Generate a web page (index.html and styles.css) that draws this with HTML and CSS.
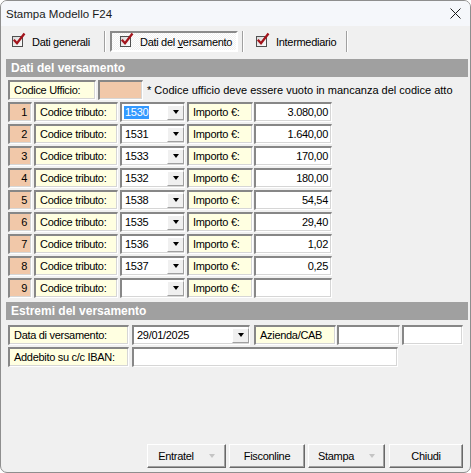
FILE: index.html
```html
<!DOCTYPE html>
<html>
<head>
<meta charset="utf-8">
<link rel="stylesheet" href="styles.css">
</head>
<body>
<div class="window">
  <div class="titlebar">
    <span class="title">Stampa Modello F24</span>
    <svg class="close" width="11" height="11" viewBox="0 0 11 11"><path d="M0.5 0.5 L10.5 10.5 M10.5 0.5 L0.5 10.5" stroke="#1a1a1a" stroke-width="1" fill="none"/></svg>
  </div>
  <div class="tabs">
    <div class="tab t1">
      <svg class="chk" width="11" height="11" viewBox="0 0 11 11"><defs><linearGradient id="g1" x1="0" y1="0" x2="1" y2="1"><stop offset="0" stop-color="#d8d8d8"/><stop offset="1" stop-color="#ffffff"/></linearGradient></defs><rect x="0.5" y="0.5" width="10" height="10" fill="url(#g1)" stroke="#505050"/><path d="M1.8 3.8 L5 7.3 L12.5 -2.5" stroke="#a3141c" stroke-width="2.3" fill="none"/></svg>
      <span>Dati generali</span>
    </div>
    <div class="sep"></div>
    <div class="tab t2 pressed">
      <svg class="chk" width="11" height="11" viewBox="0 0 11 11"><rect x="0.5" y="0.5" width="10" height="10" fill="url(#g1)" stroke="#505050"/><path d="M1.8 3.8 L5 7.3 L12.5 -2.5" stroke="#a3141c" stroke-width="2.3" fill="none"/></svg>
      <span>Dati del <u>v</u>ersamento</span>
    </div>
    <div class="sep"></div>
    <div class="tab t3">
      <svg class="chk" width="11" height="11" viewBox="0 0 11 11"><rect x="0.5" y="0.5" width="10" height="10" fill="url(#g1)" stroke="#505050"/><path d="M1.8 3.8 L5 7.3 L12.5 -2.5" stroke="#a3141c" stroke-width="2.3" fill="none"/></svg>
      <span>Intermediario</span>
    </div>
    <div class="sep"></div>
  </div>

  <div class="content">
    <div class="section">Dati del versamento</div>
    <div class="rows">
      <div class="row">
        <div class="box label w-uff">Codice Ufficio:</div>
        <div class="box peach w-uffv"></div>
        <div class="note">* Codice ufficio deve essere vuoto in mancanza del codice atto</div>
      </div>

      <div class="row">
        <div class="box peach num">1</div>
        <div class="box label w-trib">Codice tributo:</div>
        <div class="box input combo w-combo"><span class="sel">1530</span><span class="ddbtn"><i class="tri"></i></span></div>
        <div class="box label w-imp">Importo €:</div>
        <div class="box input val">3.080,00</div>
      </div>
      <div class="row">
        <div class="box peach num">2</div>
        <div class="box label w-trib">Codice tributo:</div>
        <div class="box input combo w-combo"><span>1531</span><span class="ddbtn"><i class="tri"></i></span></div>
        <div class="box label w-imp">Importo €:</div>
        <div class="box input val">1.640,00</div>
      </div>
      <div class="row">
        <div class="box peach num">3</div>
        <div class="box label w-trib">Codice tributo:</div>
        <div class="box input combo w-combo"><span>1533</span><span class="ddbtn"><i class="tri"></i></span></div>
        <div class="box label w-imp">Importo €:</div>
        <div class="box input val">170,00</div>
      </div>
      <div class="row">
        <div class="box peach num">4</div>
        <div class="box label w-trib">Codice tributo:</div>
        <div class="box input combo w-combo"><span>1532</span><span class="ddbtn"><i class="tri"></i></span></div>
        <div class="box label w-imp">Importo €:</div>
        <div class="box input val">180,00</div>
      </div>
      <div class="row">
        <div class="box peach num">5</div>
        <div class="box label w-trib">Codice tributo:</div>
        <div class="box input combo w-combo"><span>1538</span><span class="ddbtn"><i class="tri"></i></span></div>
        <div class="box label w-imp">Importo €:</div>
        <div class="box input val">54,54</div>
      </div>
      <div class="row">
        <div class="box peach num">6</div>
        <div class="box label w-trib">Codice tributo:</div>
        <div class="box input combo w-combo"><span>1535</span><span class="ddbtn"><i class="tri"></i></span></div>
        <div class="box label w-imp">Importo €:</div>
        <div class="box input val">29,40</div>
      </div>
      <div class="row">
        <div class="box peach num">7</div>
        <div class="box label w-trib">Codice tributo:</div>
        <div class="box input combo w-combo"><span>1536</span><span class="ddbtn"><i class="tri"></i></span></div>
        <div class="box label w-imp">Importo €:</div>
        <div class="box input val">1,02</div>
      </div>
      <div class="row">
        <div class="box peach num">8</div>
        <div class="box label w-trib">Codice tributo:</div>
        <div class="box input combo w-combo"><span>1537</span><span class="ddbtn"><i class="tri"></i></span></div>
        <div class="box label w-imp">Importo €:</div>
        <div class="box input val">0,25</div>
      </div>
      <div class="row">
        <div class="box peach num">9</div>
        <div class="box label w-trib">Codice tributo:</div>
        <div class="box input combo w-combo"><span></span><span class="ddbtn"><i class="tri"></i></span></div>
        <div class="box label w-imp">Importo €:</div>
        <div class="box input val"></div>
      </div>
    </div>

    <div class="section s2">Estremi del versamento</div>
    <div class="rows rows2">
      <div class="row">
        <div class="box label w-data">Data di versamento:</div>
        <div class="box input combo w-date"><span>29/01/2025</span><span class="ddbtn"><i class="tri"></i></span></div>
        <div class="box label w-az">Azienda/CAB</div>
        <div class="box input w-az1"></div>
        <div class="box input w-az2"></div>
      </div>
      <div class="row">
        <div class="box label w-data">Addebito su c/c IBAN:</div>
        <div class="box input w-iban"></div>
      </div>
    </div>
  </div>

  <div class="buttons">
    <div class="btn b1"><span>Entratel</span><i class="tri gray"></i></div>
    <div class="btn b2"><span>Fisconline</span></div>
    <div class="btn b3"><span>Stampa</span><i class="tri gray"></i></div>
    <div class="btn b4"><span>Chiudi</span></div>
  </div>
</div>
</body>
</html>
```

FILE: styles.css
```css
* { box-sizing: border-box; }
html, body { margin: 0; padding: 0; }
body {
  width: 471px;
  height: 473px;
  background: #ffffff;
  font-family: "Liberation Sans", Arial, sans-serif;
  font-size: 11px;
  letter-spacing: -0.3px;
  color: #000;
}
.window {
  width: 471px;
  height: 473px;
  border: 1px solid #8e8e8e;
  border-radius: 7px;
  background: #f0f0f0;
  display: flex;
  flex-direction: column;
  overflow: hidden;
}
.titlebar {
  height: 25px;
  flex-shrink: 0;
  background: #f5f7fb;
  display: flex;
  align-items: center;
  padding-left: 5px;
  padding-right: 9px;
}
.title {
  font-family: "Liberation Sans", Arial, sans-serif;
  font-size: 11.5px;
  letter-spacing: 0;
  color: #1a1a1a;
}
.close { margin-left: auto; }

.tabs {
  display: flex;
  padding-top: 5px;
  padding-left: 3px;
  height: 26px;
  flex-shrink: 0;
}
.tab {
  display: flex;
  align-items: center;
  height: 21px;
  padding-left: 8px;
  gap: 9px;
  white-space: nowrap;
}
.chk { overflow: visible; flex-shrink: 0; }
.t1 { width: 96px; }
.t2 { width: 128px; }
.t3 { width: 94px; }
.pressed {
  border: 2px solid;
  border-color: #8a8a8a #ffffff #ffffff #8a8a8a;
  background: repeating-conic-gradient(#ffffff 0 25%, #f0f0f0 0 50%) 0 0 / 2px 2px;
}
.sep {
  width: 2px;
  height: 21px;
  border-left: 1px solid #a0a0a0;
  border-right: 1px solid #ffffff;
  margin: 0 4px;
}

.content {
  padding-left: 5px;
  padding-right: 2px;
  margin-top: 7px;
}
.section {
  height: 18px;
  line-height: 18px;
  background: #a0a0a0;
  color: #ffffff;
  font-weight: bold;
  font-size: 12px;
  letter-spacing: 0;
  padding-left: 5px;
}
.s2 { margin-top: 4px; }
.rows {
  margin-left: 2px;
  margin-top: 3px;
  display: flex;
  flex-direction: column;
  gap: 2px;
}
.rows2 { margin-top: 5px; }
.row {
  display: flex;
  height: 20px;
  align-items: stretch;
}
.box {
  height: 20px;
  border-style: solid;
  border-width: 2px 1px 1px 2px;
  border-color: #878787 #ffffff #ffffff #878787;
  box-shadow: inset -1px -1px #d6d6d6;
  line-height: 16px;
  white-space: nowrap;
  overflow: hidden;
  flex-shrink: 0;
}
.label { background: #ffffe1; padding-left: 4px; }
.peach { background: #f1c8a9; }
.input { background: #ffffff; }
.num { width: 24px; margin-right: 2px; text-align: right; padding-right: 4px; }
.w-uff { width: 88px; margin-right: 2px; }
.w-uffv { width: 45px; margin-right: 4px; }
.note { line-height: 20px; white-space: nowrap; letter-spacing: 0; }
.w-trib { width: 84px; margin-right: 2px; }
.w-combo { width: 65px; margin-right: 2px; }
.w-imp { width: 66px; margin-right: 1px; }
.val { width: 78px; text-align: right; padding-right: 3px; }

.combo {
  display: flex;
  align-items: center;
  padding-left: 2px;
}
.combo > span:first-child { line-height: 13px; padding: 0 1px; }
.sel { background: #3399ff; color: #ffffff; }
.ddbtn {
  margin-left: auto;
  width: 17px;
  height: 15px;
  background: #f0f0f0;
  border-style: solid;
  border-width: 1px;
  border-color: #ffffff #a0a0a0 #a0a0a0 #ffffff;
  display: flex;
  align-items: center;
  justify-content: center;
  margin-top: -1px;
}
.tri {
  display: block;
  width: 0;
  height: 0;
  border-left: 3.5px solid transparent;
  border-right: 3.5px solid transparent;
  border-top: 4px solid #000000;
}
.tri.gray { border-top-color: #c4c4c4; }

.w-data { width: 121px; margin-right: 3px; }
.w-date { width: 118px; margin-right: 4px; }
.w-az { width: 82px; margin-right: 1px; }
.w-az1 { width: 63px; margin-right: 2px; }
.w-az2 { width: 61px; }
.w-iban { width: 266px; }

.buttons {
  margin-top: auto;
  display: flex;
  padding-left: 146px;
  padding-bottom: 4px;
}
.btn {
  height: 24px;
  background: #f0f0f0;
  border-style: solid;
  border-width: 1px;
  border-color: #ffffff #696969 #696969 #ffffff;
  box-shadow: inset -1px -1px #a0a0a0;
  display: flex;
  align-items: center;
  justify-content: center;
  gap: 15px;
  padding-bottom: 1px;
}
.b1 { width: 79px; margin-right: 3px; }
.b2 { width: 76px; margin-right: 3px; }
.b3 { width: 77px; margin-right: 4px; }
.b4 { width: 74px; }
```
